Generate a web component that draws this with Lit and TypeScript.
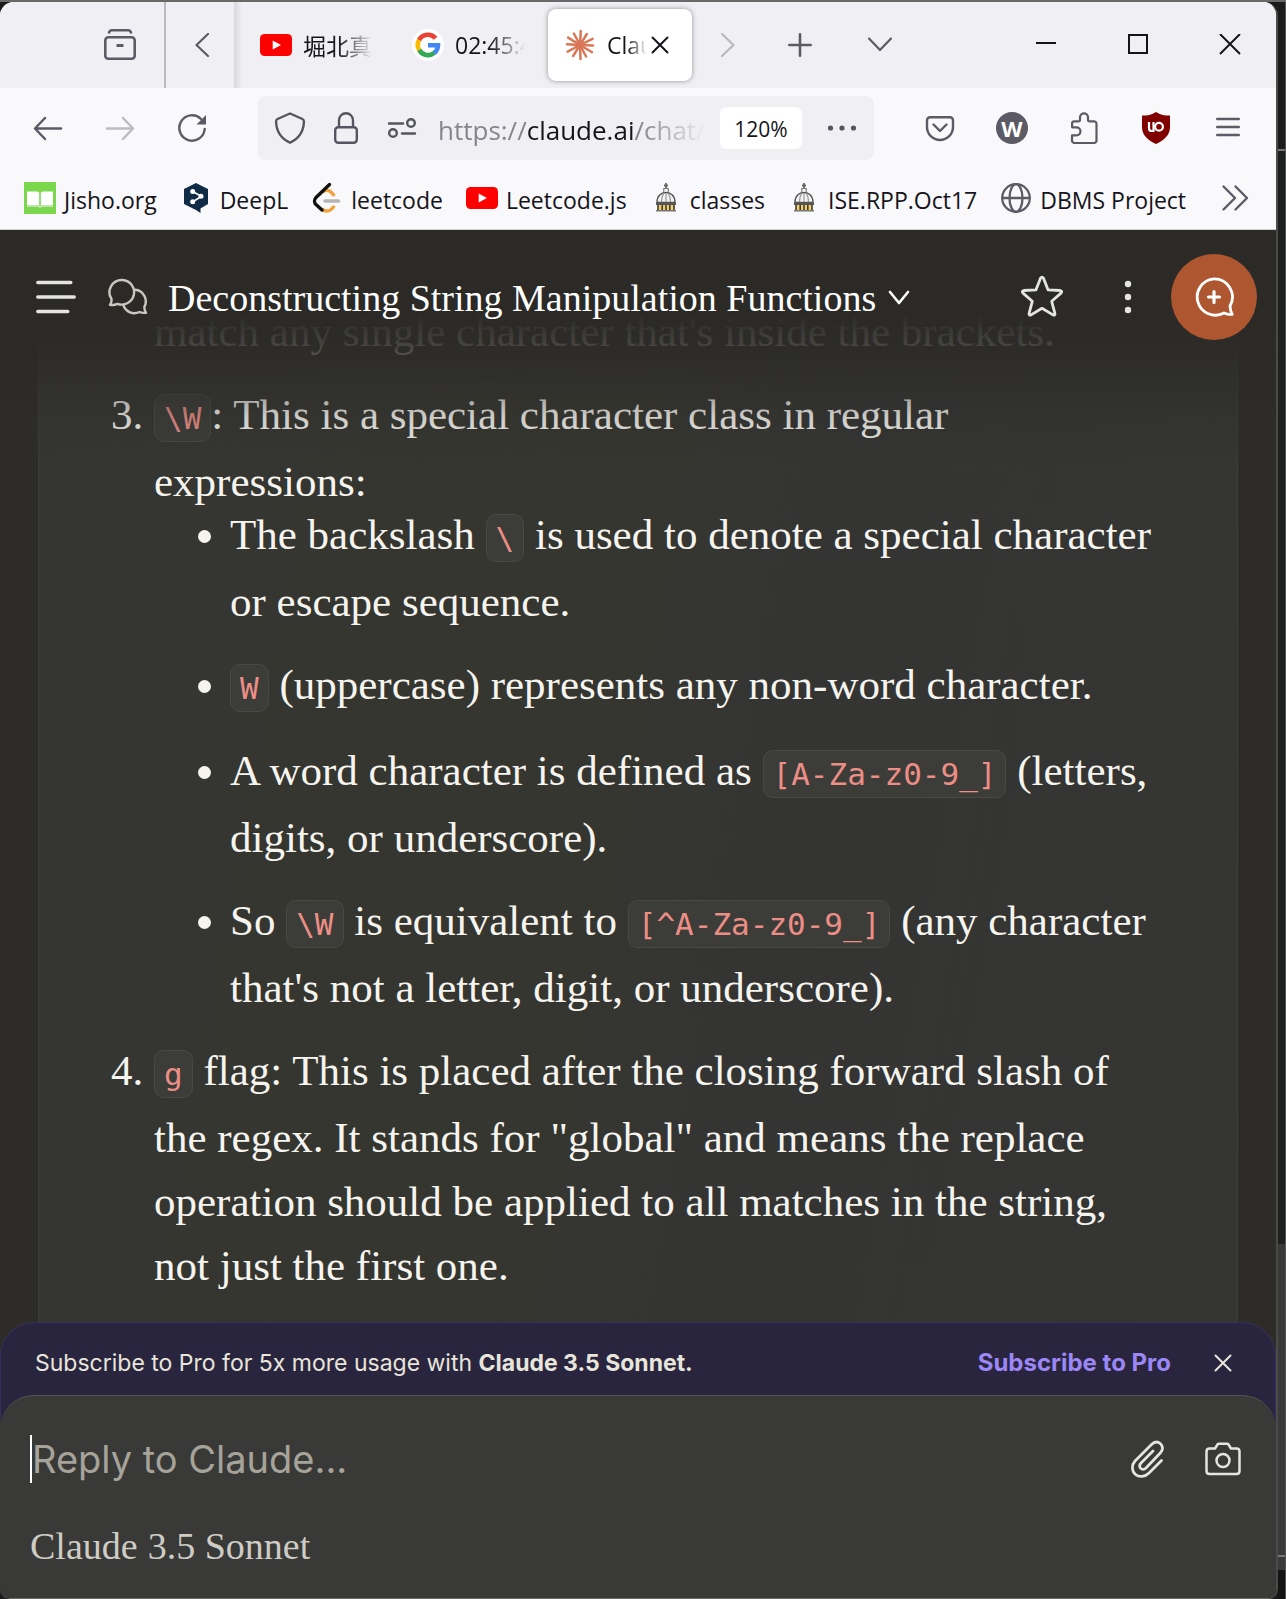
import { LitElement, html, css, svg } from "lit";
import { customElement } from "lit/decorators.js";

const youtube = html`<svg width="32" height="32" viewBox="0 0 32 32"><rect x="0" y="5" width="32" height="22" rx="4.500" fill="#f00"/><path d="M12.700 11.500v9l8.300-4.500z" fill="#fff"/></svg>`;

const dome = html`<svg width="32" height="32" viewBox="0 0 32 32" fill="none"><path d="M14 3.500h4M16 1v6" stroke="#666" stroke-width="1.800"/><path d="M13.800 6.500h4.400v4h-4.400z" fill="#fff" stroke="#777" stroke-width="1.200"/><path d="M7 20.500c0-6.500 4-10 9-10s9 3.500 9 10z" fill="#f4f4f4" stroke="#555" stroke-width="1.400"/><path d="M11.500 20c0-4 1-7 2.500-9M20.500 20c0-4-1-7-2.500-9M16 11v9" stroke="#999" stroke-width="1.200"/><path d="M6 20.500h20v2.500H6z" fill="#555"/><path d="M7.500 23h17v5h-17z" fill="#f3cf6c"/><path d="M8 23v5M12.200 23v5M16 23v5M19.800 23v5M24 23v5" stroke="#333" stroke-width="1.500"/><path d="M6 28.700h20" stroke="#777" stroke-width="1.500"/></svg>`;

const icon = {
  archive: html`<svg width="32" height="32" viewBox="0 0 32 32" fill="none" stroke="currentColor" stroke-width="2.600" stroke-linecap="round"><path d="M5 3.500c.6-1.600 1.500-2.200 3-2.200h16c1.500 0 2.400.6 3 2.200"/><rect x="1.300" y="8.300" width="29.400" height="21.400" rx="3"/><path d="M12.500 16.500h7" stroke-linecap="butt" stroke-width="3"/></svg>`,
  left: html`<svg width="24" height="24" viewBox="0 0 24 24" fill="none" stroke="currentColor" stroke-width="2.200" stroke-linecap="round" stroke-linejoin="round"><path d="M20 1 8.500 12 20 23"/></svg>`,
  right: html`<svg width="24" height="24" viewBox="0 0 24 24" fill="none" stroke="currentColor" stroke-width="2.200" stroke-linecap="round" stroke-linejoin="round"><path d="m6 1 11.500 11L6 23"/></svg>`,
  google: html`<svg width="32" height="32" viewBox="0 0 32 32" fill="none"><circle cx="16" cy="16" r="16" fill="#fff"/><g stroke-width="4.600"><path d="M7 11.300A10 10 0 0 1 23.600 9.300" stroke="#ea4335"/><path d="M7.300 21.300A10 10 0 0 1 7.100 11" stroke="#fbbc05"/><path d="M22.400 23.700A10 10 0 0 1 7.200 21" stroke="#34a853"/><path d="M16 16.300h10A10 10 0 0 1 22.300 23.900" stroke="#4285f4"/></g></svg>`,
  burst: html`<svg width="32" height="32" viewBox="0 0 32 32" fill="none" stroke="#d97757" stroke-width="2.500" stroke-linecap="round">${[2, 31, 62, 88, 122, 152, 183, 212, 242, 273, 302, 334].map((a, i) => svg`<path d="M16 16H${i % 2 ? 30 : 29}" transform="rotate(${a} 16 16)"/>`)}</svg>`,
  x: html`<svg width="20" height="20" viewBox="0 0 20 20" fill="none" stroke="currentColor" stroke-width="2" stroke-linecap="round"><path d="m2.500 2.500 15 15m0-15-15 15"/></svg>`,
  plus: html`<svg width="24" height="24" viewBox="0 0 24 24" fill="none" stroke="currentColor" stroke-width="2.600" stroke-linecap="round"><path d="M12 1.300v21.400M1.300 12h21.400"/></svg>`,
  down: html`<svg width="24" height="24" viewBox="0 0 24 24" fill="none" stroke="currentColor" stroke-width="2.200" stroke-linecap="round" stroke-linejoin="round"><path d="m1 5.500 11 11.500L23 5.500"/></svg>`,
  chevron: html`<svg width="22" height="22" viewBox="0 0 22 22" fill="none" stroke="currentColor" stroke-width="2.600" stroke-linecap="round" stroke-linejoin="round"><path d="m2 5 9 11 9-11"/></svg>`,
  min: html`<svg width="22" height="22" viewBox="0 0 22 22" stroke="currentColor" stroke-width="2"><path d="M1 9h20"/></svg>`,
  max: html`<svg width="22" height="22" viewBox="0 0 22 22" fill="none" stroke="currentColor" stroke-width="2"><path d="M2 1h18v18H2z"/></svg>`,
  close: html`<svg width="22" height="22" viewBox="0 0 22 22" stroke="currentColor" stroke-width="2"><path d="m1 0 20 20M21 0 1 20"/></svg>`,
  back: html`<svg width="32" height="32" viewBox="0 0 32 32" fill="none" stroke="currentColor" stroke-width="2.500" stroke-linecap="round" stroke-linejoin="round"><path d="M29 16.500H3.500M13 6 3 16.500 13 27"/></svg>`,
  forward: html`<svg width="32" height="32" viewBox="0 0 32 32" fill="none" stroke="currentColor" stroke-width="2.500" stroke-linecap="round" stroke-linejoin="round"><path d="M3 16.500h25.500M19 6l10 10.500L19 27"/></svg>`,
  reload: html`<svg width="32" height="32" viewBox="0 0 32 32" fill="none" stroke="currentColor" stroke-width="2.400" stroke-linecap="round"><path d="M28.700 17A12.700 12.700 0 1 1 25 7"/><path d="M30 3v9.500h-9.500z" fill="currentColor" stroke="none"/></svg>`,
  shield: html`<svg width="32" height="32" viewBox="0 0 32 32" fill="none" stroke="currentColor" stroke-width="2.400" stroke-linejoin="round"><path d="M16 1.500 28.500 7c1.500.7 1.500 1.500 1.400 3C29.500 20 24 27 16 30.700 8 27 2.500 20 2.100 10c-.1-1.500-.1-2.300 1.400-3z"/></svg>`,
  lock: html`<svg width="32" height="32" viewBox="0 0 32 32" fill="none" stroke="currentColor" stroke-width="2.400"><rect x="5.200" y="15.200" width="21.600" height="15.600" rx="3"/><path d="M9 15V8.200a7 7 0 0 1 14 0V15"/></svg>`,
  sliders: html`<svg width="32" height="32" viewBox="0 0 32 32" fill="none" stroke="currentColor" stroke-width="2.400" stroke-linecap="round"><path d="M3 11.500h14M16 21.500h13"/><circle cx="25" cy="11" r="3.800"/><circle cx="7" cy="21" r="3.800"/></svg>`,
  dots: html`<svg width="32" height="32" viewBox="0 0 32 32" fill="currentColor"><circle cx="4.500" cy="16" r="2.600"/><circle cx="16" cy="16" r="2.600"/><circle cx="27.500" cy="16" r="2.600"/></svg>`,
  pocket: html`<svg width="32" height="32" viewBox="0 0 32 32" fill="none" stroke="currentColor" stroke-width="2.400" stroke-linecap="round" stroke-linejoin="round"><path d="M6 5.200h20a3 3 0 0 1 3 3V15a13 13 0 0 1-26 0V8.200a3 3 0 0 1 3-3z"/><path d="m9.500 12.500 6.500 6.500 6.500-6.500"/></svg>`,
  puzzle: html`<svg width="32" height="32" viewBox="0 0 32 32" fill="none" stroke="currentColor" stroke-width="2.200" stroke-linejoin="round"><path d="M4.100 15.300v-4a2 2 0 0 1 2-2h4.300a1.600 1.600 0 0 0 1.600-1.600V5.300a4 4 0 0 1 8 0v2.400a1.600 1.600 0 0 0 1.600 1.600h4.400a2.500 2.500 0 0 1 2.500 2.500v16.700a2.500 2.500 0 0 1-2.500 2.500H6.500a2.500 2.500 0 0 1-2.500-2.500v-5.200h4.500a4 4 0 0 0 0-8z"/></svg>`,
  ublock: html`<svg width="32" height="32" viewBox="0 0 32 32" fill="none"><path d="M16 0c4 3 9 3.500 14 3.500V15c0 9-7 13.500-14 17C9 28.500 2 24 2 15V3.500C7 3.500 12 3 16 0z" fill="#800000"/><g stroke="#fff" stroke-width="2.200"><path d="M9 10v6.200a2.800 2.800 0 0 0 2.800 2.800h1.700V10"/><circle cx="19" cy="14.700" r="3.900"/></g></svg>`,
  menu: html`<svg width="24" height="24" viewBox="0 0 24 24" stroke="currentColor" stroke-width="2.400" stroke-linecap="round"><path d="M1.200 3h21.600M1.200 11h21.600M1.200 19h21.600"/></svg>`,
  jisho: html`<svg width="32" height="32" viewBox="0 0 32 32"><path fill="#7bd74b" d="M0 0h32v32H0z"/><path fill="#fff" d="M3 9.500h10q2 0 2.200 1.200v12.800Q15 23 13 23H3zM29 9.500H19q-2 0-2.200 1.200v12.800Q17 23 19 23h10z"/><path stroke="#d5e8cc" stroke-width="1.500" d="M3 24h11.500l1.500 1 1.500-1H29" fill="none"/></svg>`,
  deepl: html`<svg width="32" height="32" viewBox="0 0 32 32"><path fill="#0f2b46" d="M16 1l12 6v15l-7.500 4.500V31L16 28 4 22V7z"/><path d="M12.500 9.500 21.500 14.300l-9 5.700" stroke="#fff" stroke-width="1.600" fill="none"/><g fill="#fff"><circle cx="12.700" cy="9.500" r="2.500"/><circle cx="21" cy="14.300" r="2.500"/><circle cx="12.700" cy="19.800" r="2.500"/></g></svg>`,
  leetcode: html`<svg width="32" height="32" viewBox="0 0 32 32" fill="none" stroke-width="3.400" stroke-linecap="round"><path d="M12.500 9.500c2.500-2 5-1.500 7 .3l3 3M22.500 25l-2.500 2.500c-2.500 2-6 1.800-8.500 0" stroke="#f0a33c"/><path d="M14 19h13.500" stroke="#b5b5b5"/><path d="M18.500 2.500 5 15.500c-2 2-2 5 0 7l6 5.500" stroke="#111"/></svg>`,
  globe: html`<svg width="32" height="32" viewBox="0 0 32 32" fill="none" stroke="currentColor" stroke-width="2.300"><circle cx="16" cy="16" r="13.800"/><ellipse cx="16" cy="16" rx="6.500" ry="13.800"/><path d="M2 16h28"/></svg>`,
  more: html`<svg width="28" height="28" viewBox="0 0 28 28" fill="none" stroke="currentColor" stroke-width="2.400" stroke-linecap="round" stroke-linejoin="round"><path d="m2.500 2.500 11.500 11.500L2.500 25.500M14.500 2.500 26 14 14.500 25.500"/></svg>`,
  sidebar: html`<svg width="40" height="36" viewBox="0 0 40 36" stroke="currentColor" stroke-width="3.400" stroke-linecap="round"><path d="M1.800 3.500h33M1.800 18h36.400M1.800 32.500h30"/></svg>`,
  chats: html`<svg width="40" height="40" viewBox="0 0 40 40" fill="none" stroke="currentColor" stroke-width="2.400" stroke-linejoin="round" stroke-linecap="round"><path d="M14.500 3A12.300 12.300 0 1 1 9.500 26.800c-2.200 1-4.800 1.400-7.500 1 1.200-1.800 1.700-3.800 1.500-5.800A12.300 12.300 0 0 1 14.500 3z"/><path d="M27 12.800a11.600 11.600 0 0 1 9.300 17.200c0 2.200.5 4 1.700 5.700-2.500.5-4.500.1-6.500-.7-6.500 3-13.500.3-16.200-7"/></svg>`,
  star: html`<svg width="44" height="44" viewBox="0 0 44 44" fill="none" stroke="currentColor" stroke-width="2.800" stroke-linejoin="round"><path d="M20.500 3.200Q22 1.200 23.500 3.200l4.500 11.600 12.300.7q2.400.6.700 2.600l-9.300 8.200 3.200 12q.3 2.400-1.900 1.600L22 33.300 11 39.900q-2.200.8-1.900-1.600l3.200-12L3 18.100q-1.700-2 .7-2.600l12.300-.7z"/></svg>`,
  kebab: html`<svg width="8" height="34" viewBox="0 0 8 34" fill="currentColor"><circle cx="4" cy="4" r="3.200"/><circle cx="4" cy="17" r="3.200"/><circle cx="4" cy="30" r="3.200"/></svg>`,
  newChat: html`<svg width="44" height="44" viewBox="0 0 44 44" fill="none" stroke="currentColor" stroke-width="2.800" stroke-linejoin="round" stroke-linecap="round"><path d="M22 3.800A18.200 18.200 0 0 1 38 31c0 3 .9 5.700 2.200 8.300-3.200.4-5.700-.2-8.200-1.300A18.200 18.200 0 1 1 22 3.800z"/><path d="M22 16.500v11M16.500 22h11" stroke-width="3.200"/></svg>`,
  clip: html`<svg width="36" height="40" viewBox="0 0 36 40" fill="none" stroke="currentColor" stroke-width="2.700" stroke-linecap="round" stroke-linejoin="round"><path d="M32.500 21.500 20 34c-4 4-10 4.500-13.500 1.500C2.500 32 2.500 26 6 22L22.500 5.500c3-3 6.500-3 9-.800 2.500 2.500 2.500 6 0 9L17 29c-1.700 1.700-4 1.700-5.300.3-1.500-1.500-1.200-3.600.3-5.300L24 12"/></svg>`,
  camera: html`<svg width="36" height="36" viewBox="0 0 36 36" fill="none" stroke="currentColor" stroke-width="2.500" stroke-linejoin="round"><path d="M10 7.500 12.500 3.500q.5-.8 1.500-.8h8q1 0 1.500.8L26 7.500h5.500q3 0 3 3V30q0 3-3 3h-27q-3 0-3-3V10.500q0-3 3-3z"/><circle cx="18" cy="19.500" r="6.500"/></svg>`,
};

const bookmarks = [
  { label: "Jisho.org", icon: icon.jisho },
  { label: "DeepL", icon: icon.deepl },
  { label: "leetcode", icon: icon.leetcode },
  { label: "Leetcode.js", icon: youtube },
  { label: "classes", icon: dome },
  { label: "ISE.RPP.Oct17", icon: dome },
  { label: "DBMS Project", icon: icon.globe },
];

const reset = css`
  * { box-sizing: border-box; }
  svg { display: block; flex: none; }
  button { display: flex; align-items: center; justify-content: center; border: 0; padding: 0; background: none; color: inherit; font: inherit; cursor: pointer; }
  a { color: inherit; text-decoration: none; }
`;

@customElement("browser-chrome")
class BrowserChrome extends LitElement {
  static styles = [reset, css`
    :host { display: block; background: #f9f9fb; color: #5b5b66; font-family: "Open Sans", "Noto Sans", "Noto Sans CJK JP", sans-serif; border-bottom: 1px solid #ccd0c8; }
    .tabs { display: flex; align-items: center; height: 86px; background: #f0f0f4; padding-left: 104px; }
    .history { width: 60px; height: 86px; justify-content: flex-start; border-right: 2px solid #b9b9be; box-sizing: content-box; }
    .scroll { width: 68px; height: 86px; }
    .edge { width: 8px; height: 86px; background: linear-gradient(90deg, #d9d9dd, #f0f0f4); }
    .tab { display: flex; align-items: center; gap: 11px; height: 72px; border-radius: 8px; color: #15141a; font-size: 23px; width: 152px; padding-left: 18px; }
    .tab.current { width: 144px; margin-left: 2px; background: #fff; box-shadow: 0 0 5px rgba(0, 0, 0, .4); padding-left: 16px; }
    .name { width: 70px; overflow: hidden; white-space: nowrap; -webkit-mask-image: linear-gradient(90deg, #000 50%, transparent); mask-image: linear-gradient(90deg, #000 50%, transparent); }
    .current .name { width: 40px; margin-right: -8px; }
    .scroll.off { width: 72px; color: #b9b9be; }
    .tool { width: 72px; height: 72px; }
    .tool + .tool { margin-left: 8px; }
    .window { display: flex; margin-left: auto; color: #15141a; }
    .window button { width: 92px; height: 86px; }
    .nav { display: flex; align-items: center; height: 80px; padding: 0 12px; }
    .nav > button { width: 72px; height: 64px; }
    .nav > .off { color: #bbbbc1; }
    .address { display: flex; align-items: center; flex: 1; min-width: 0; height: 64px; margin: 0 30px; padding: 0 16px; background: #f0f0f4; border-radius: 8px; gap: 24px; color: #55555f; }
    .url { flex: 1; min-width: 0; overflow: hidden; white-space: nowrap; font-size: 26px; line-height: 36px; padding-top: 4px; color: #85858d; margin-left: -4px; -webkit-mask-image: linear-gradient(90deg, #000 75%, transparent); mask-image: linear-gradient(90deg, #000 75%, transparent); }
    .url b { font-weight: 400; color: #15141a; }
    .zoom { width: 82px; height: 42px; border-radius: 6px; background: #fff; color: #15141a; font-size: 21px; margin-left: -10px; padding-top: 2px; }
    .badge { display: flex; align-items: center; justify-content: center; width: 32px; height: 32px; border-radius: 50%; background: #5b5b66; color: #fff; font-weight: 700; font-size: 22px; }
    .marks { display: flex; align-items: center; height: 61px; padding: 0 27px 2px 24px; gap: 23px; }
    .mark { display: flex; align-items: center; gap: 8px; white-space: nowrap; font-size: 23px; line-height: 32px; }
    .mark span { color: #15141a; padding-top: 4px; }
    .marks button { margin-left: auto; }
  `];

  render() {
    return html`
      <div class="tabs">
        <button class="history" aria-label="Recent browsing">${icon.archive}</button>
        <button class="scroll" aria-label="Scroll tabs left">${icon.left}</button>
        <div class="edge"></div>
        <div class="tab">${youtube}<span class="name">堀北真希</span></div>
        <div class="tab">${icon.google}<span class="name">02:45:43</span></div>
        <div class="tab current">${icon.burst}<span class="name">Claude</span><button aria-label="Close tab">${icon.x}</button></div>
        <button class="scroll off" aria-label="Scroll tabs right">${icon.right}</button>
        <button class="tool" aria-label="New tab">${icon.plus}</button>
        <button class="tool" aria-label="List all tabs">${icon.down}</button>
        <div class="window">
          <button aria-label="Minimize">${icon.min}</button>
          <button aria-label="Maximize">${icon.max}</button>
          <button aria-label="Close">${icon.close}</button>
        </div>
      </div>
      <nav class="nav">
        <button aria-label="Back">${icon.back}</button>
        <button class="off" aria-label="Forward">${icon.forward}</button>
        <button aria-label="Reload">${icon.reload}</button>
        <div class="address">
          ${icon.shield}${icon.lock}${icon.sliders}
          <div class="url">https://<b>claude.ai</b>/chat/</div>
          <button class="zoom">120%</button>
          <button aria-label="Page actions">${icon.dots}</button>
        </div>
        <button aria-label="Pocket">${icon.pocket}</button>
        <button aria-label="Account"><span class="badge">W</span></button>
        <button aria-label="Extensions">${icon.puzzle}</button>
        <button aria-label="uBlock">${icon.ublock}</button>
        <button aria-label="Menu">${icon.menu}</button>
      </nav>
      <div class="marks">
        ${bookmarks.map((b) => html`<a class="mark" href="#">${b.icon}<span>${b.label}</span></a>`)}
        <button aria-label="More bookmarks">${icon.more}</button>
      </div>`;
  }
}

@customElement("chat-page")
class ChatPage extends LitElement {
  static styles = [reset, css`
    :host { display: flex; flex-direction: column; min-height: 0; background: #2d2c28; color: #f5f4ef; font-family: "Liberation Serif", serif; }
    .thread { position: relative; flex: 1; min-height: 0; overflow: hidden; padding: 0 38px; }
    .top { position: absolute; inset: 0 0 auto; height: 240px; display: flex; align-items: flex-start; padding: 24px 19px 0 36px; color: #e5e5e0; background: linear-gradient(#2b2a27 35%, rgba(43, 42, 39, .85) 50%, rgba(43, 42, 39, .2) 78%, rgba(43, 42, 39, 0)); }
    .top > * { height: 86px; }
    .chats { color: #c9c8c0; margin-left: 32px; }
    .title { gap: 12px; margin-left: 20px; padding-top: 2px; font-size: 38px; color: #fff; white-space: nowrap; }
    .star { margin: 0 21px 0 auto; }
    .kebab { width: 86px; }
    .new { width: 86px; border-radius: 50%; background: #ae5630; color: #fff; }
    .message { height: 100%; padding: 70px 74px 0 115px; background: linear-gradient(100deg, #353532, #363630 45%, #343433 60%, #353532); border: 1px solid #3d3d39; border-width: 0 1px; font-size: 43px; line-height: 64px; }
    ol, ul { margin: 0; padding: 0; }
    .steps { display: flex; flex-direction: column; gap: 19px; }
    .rest { list-style: none; }
    .points { display: flex; flex-direction: column; gap: 19px; margin-top: -11px; padding-left: 76px; list-style: disc; }
    code { font-family: "DejaVu Sans Mono", monospace; font-size: 31px; color: #ec8e86; background: #3c3c39; border: 1px solid #484844; border-radius: 10px; padding: 5px 9px; }
    .banner { display: flex; align-items: center; height: 98px; padding: 0 42px 18px 34px; border: 1px solid #38305c; border-bottom: 0; border-radius: 34px 34px 0 0; background: #2a253e; color: #e8e6dc; font: 23px/32px "Inter", sans-serif; white-space: nowrap; }
    .pro { margin-left: auto; margin-right: 42px; color: #9b87f5; font-size: 24px; font-weight: 700; }
    .composer { position: relative; margin-top: -25px; padding: 37px 35px 29px 30px; border-top: 1px solid #54544f; border-radius: 34px 34px 0 0; background: #393937; }
    .row { display: flex; align-items: center; height: 52px; }
    .field { display: flex; flex: 1; align-items: center; }
    .caret { width: 2px; height: 48px; background: #fff; }
    input { flex: 1; min-width: 0; height: 48px; border: 0; outline: 0; padding: 0; background: none; color: #f5f4ef; font: 38px "Inter", sans-serif; }
    input::placeholder { color: #a6a39a; opacity: 1; }
    .model { margin-top: 38px; font-size: 38px; line-height: 46px; color: #ceccc5; gap: 10px; }
    .tools { display: flex; gap: 40px; color: #e5e5e0; }
  `];

  render() {
    return html`
      <main class="thread">
        <article class="message">
          <ol class="steps" start="2">
            <li class="rest">match any single character that's inside the brackets.</li>
            <li><code>\\W</code>: This is a special character class in regular expressions:
              <ul class="points">
                <li>The backslash <code>\\</code> is used to denote a special character or escape sequence.</li>
                <li><code>W</code> (uppercase) represents any non-word character.</li>
                <li>A word character is defined as <code>[A-Za-z0-9_]</code> (letters, digits, or underscore).</li>
                <li>So <code>\\W</code> is equivalent to <code>[^A-Za-z0-9_]</code> (any character that's not a letter, digit, or underscore).</li>
              </ul>
            </li>
            <li><code>g</code> flag: This is placed after the closing forward slash of the regex. It stands for "global" and means the replace operation should be applied to all matches in the string, not just the first one.</li>
          </ol>
        </article>
        <header class="top">
          <button aria-label="Open sidebar">${icon.sidebar}</button>
          <button class="chats" aria-label="Chats">${icon.chats}</button>
          <button class="title">Deconstructing String Manipulation Functions ${icon.chevron}</button>
          <button class="star" aria-label="Star">${icon.star}</button>
          <button class="kebab" aria-label="More options">${icon.kebab}</button>
          <button class="new" aria-label="New chat">${icon.newChat}</button>
        </header>
      </main>
      <aside class="banner">
        <span>Subscribe to Pro for 5x more usage with <strong>Claude 3.5 Sonnet.</strong></span>
        <a class="pro" href="#">Subscribe to Pro</a>
        <button aria-label="Dismiss">${icon.x}</button>
      </aside>
      <form class="composer">
        <div class="row">
          <label class="field"><span class="caret"></span><input type="text" aria-label="Reply to Claude" placeholder="Reply to Claude..." /></label>
          <div class="tools">
            <button type="button" aria-label="Attach file">${icon.clip}</button>
            <button type="button" aria-label="Take screenshot">${icon.camera}</button>
          </div>
        </div>
        <button type="button" class="model"><span>Claude</span><span>3.5 Sonnet</span></button>
      </form>`;
  }
}

@customElement("app-root")
class AppRoot extends LitElement {
  static styles = css`
    :host { display: flex; box-sizing: border-box; height: 100vh; border-top: 2px solid #6b6967; background: #1b1b1b; }
    .window { display: flex; flex-direction: column; flex: 1; min-width: 0; overflow: hidden; border-radius: 14px 14px 10px 10px; border-right: 2px solid #4a4a48; border-bottom: 1px solid #6a6a68; }
    chat-page { flex: 1; }
    .desktop { width: 7px; border-right: 1px solid #555; background: linear-gradient(#1c1c1c 147px, #777 147px 149px, #1f2020 149px 1242px, #3a3a3a 1242px 1553px, #777 1553px 1555px, #3a3a3a 1555px 1568px, #141414 1568px); }
  `;

  render() {
    return html`
      <div class="window"><browser-chrome></browser-chrome><chat-page></chat-page></div>
      <div class="desktop"></div>`;
  }
}
